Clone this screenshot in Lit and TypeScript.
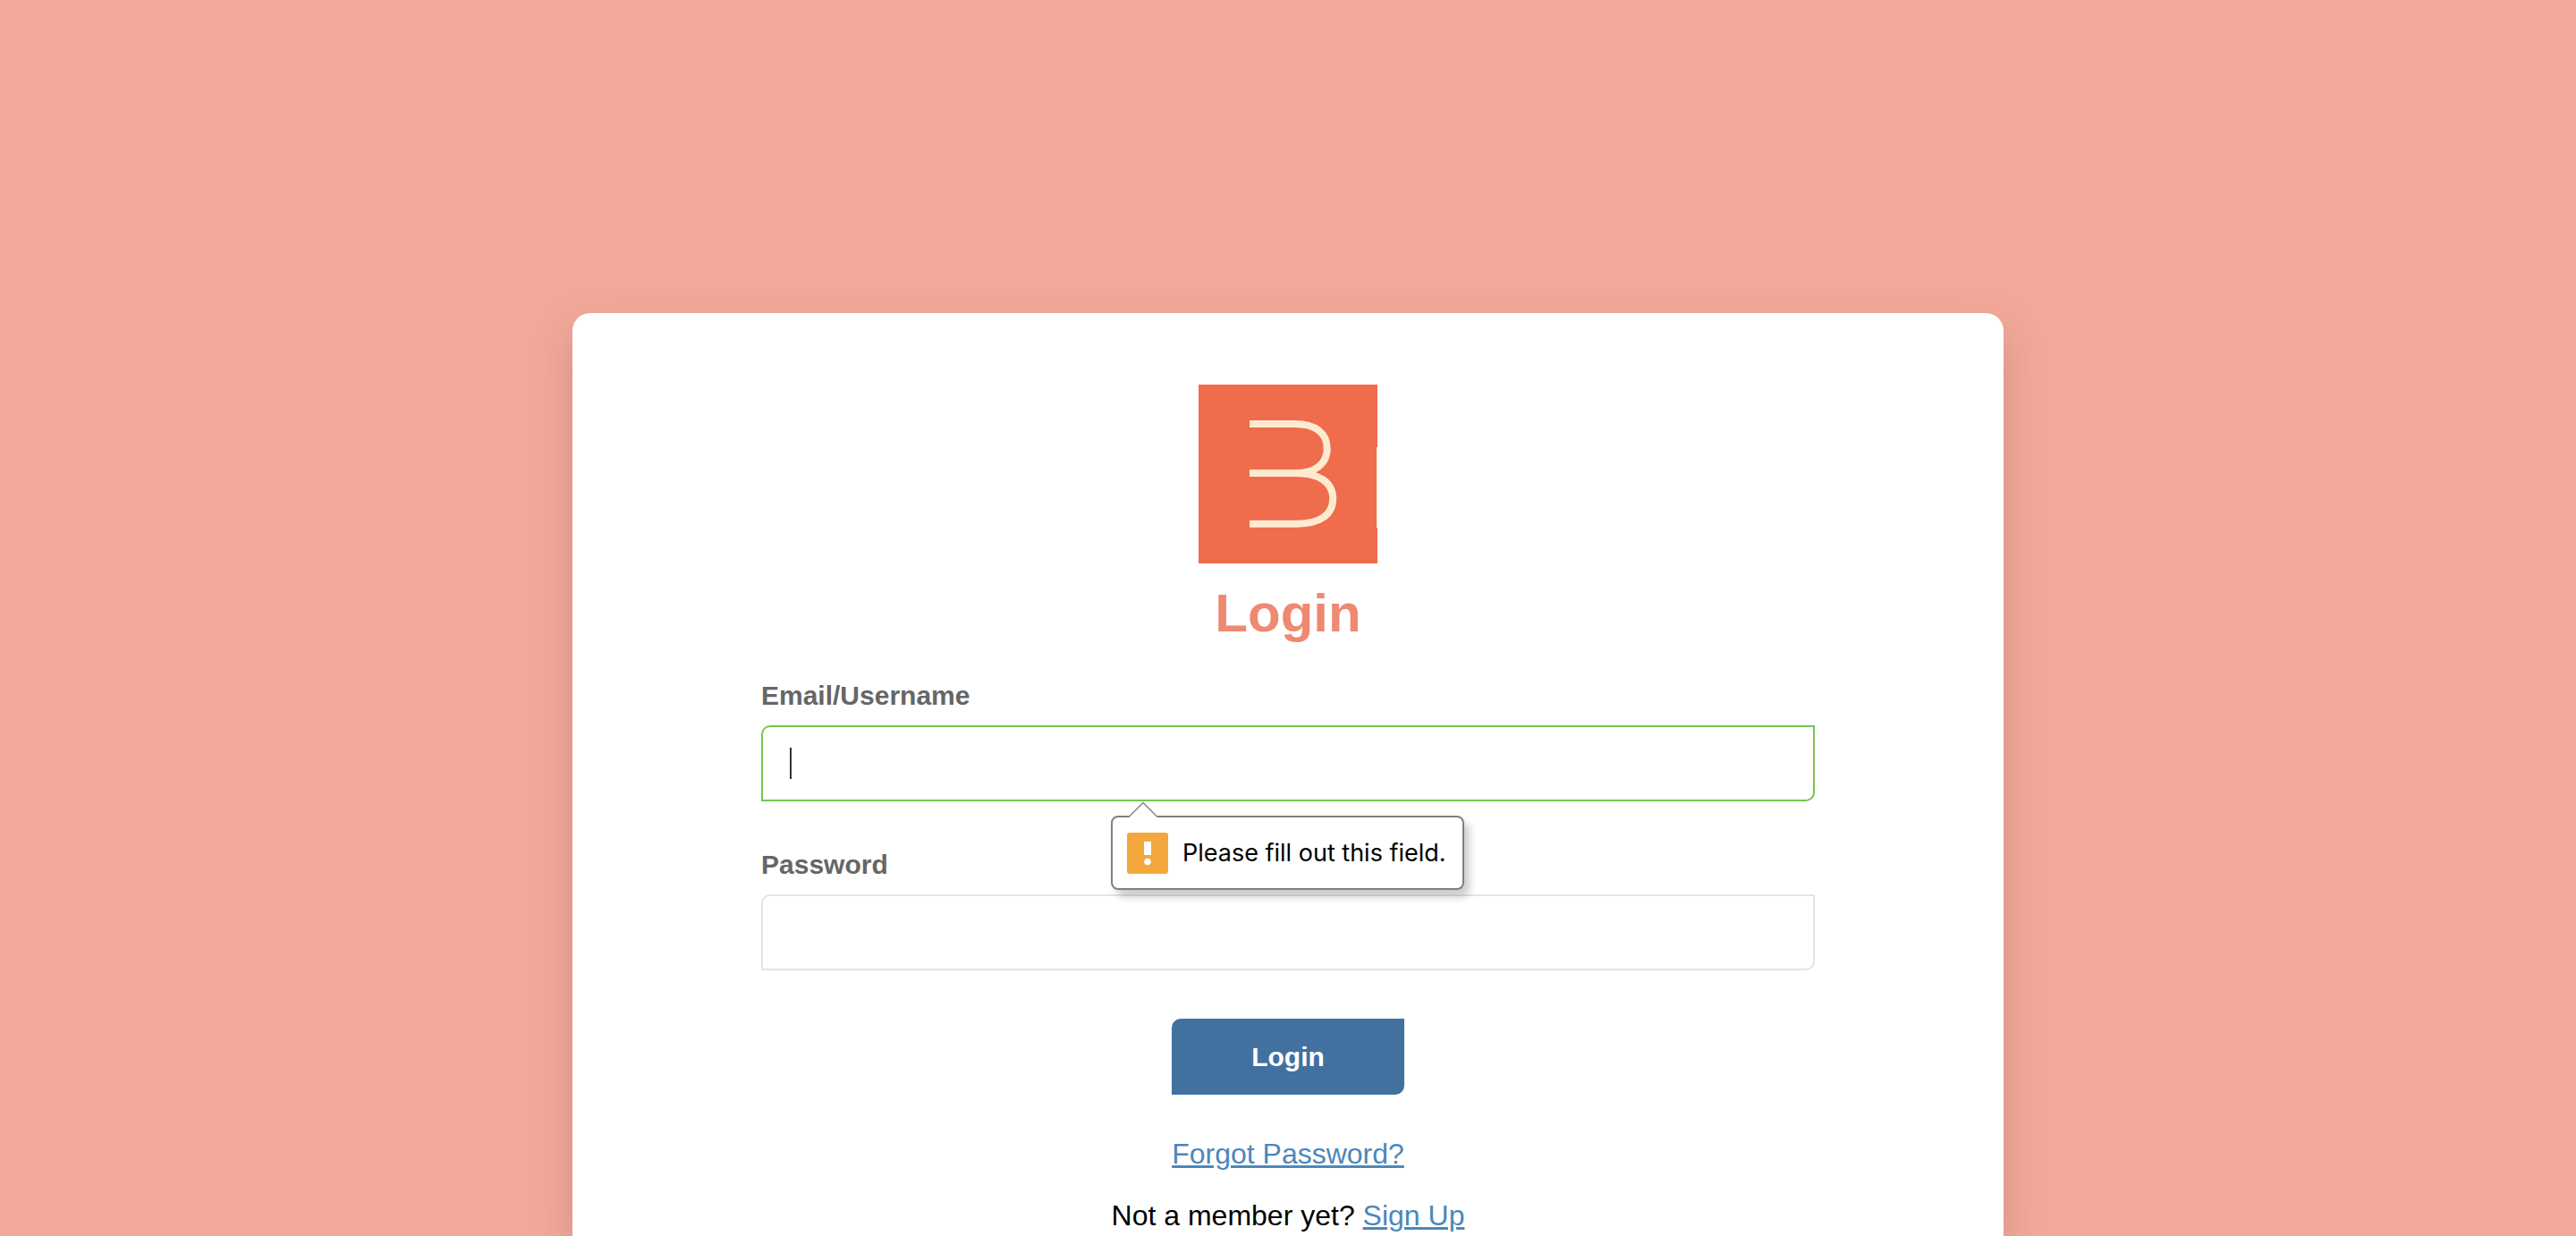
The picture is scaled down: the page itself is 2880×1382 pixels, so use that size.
import { LitElement, html, css } from "lit";
import { customElement } from "lit/decorators.js";

@customElement("brand-logo")
export class BrandLogo extends LitElement {
  static styles = css`
    :host {
      display: block;
      width: 200px;
      height: 200px;
    }
    .mark {
      display: block;
      width: 100%;
      height: 100%;
    }
  `;

  render() {
    return html`
      <svg class="mark" viewBox="0 0 200 200" aria-hidden="true">
        <rect width="200" height="200" fill="#ef6c4d" />
        <g fill="none" stroke="#feebcf" stroke-width="8">
          <path d="M57 44H108C130 44 143.7 54 143.7 71.5C143.7 89 130 99 108 99H57" />
          <path d="M108 99C134 99 150.2 108.5 150.2 127.5C150.2 146 135 155.7 110 155.7H57" />
        </g>
        <rect x="199" y="70" width="1" height="90" fill="#feebcf" />
      </svg>
    `;
  }
}

@customElement("field-hint")
export class FieldHint extends LitElement {
  static styles = css`
    :host {
      display: block;
    }
    .bubble {
      position: relative;
      display: flex;
      align-items: center;
      gap: 16px;
      box-sizing: border-box;
      height: 83px;
      padding: 0 18px 0 16px;
      border: 2px solid #808080;
      border-radius: 8px;
      background: #fff;
      box-shadow: 6px 8px 8px rgba(0, 0, 0, 0.2);
      color: #000;
      font: 27px/36px Inter, "Liberation Sans", sans-serif;
      white-space: nowrap;
    }
    .pointer {
      position: absolute;
      left: 17px;
      top: -18px;
      width: 34px;
      height: 19px;
    }
    .icon {
      flex: none;
      width: 46px;
      height: 46px;
    }
  `;

  render() {
    return html`
      <div class="bubble" role="alert">
        <svg class="pointer" viewBox="0 0 34 19" aria-hidden="true">
          <path d="M1 17.5L17 1.5L33 17.5V19H1Z" fill="#fff" />
          <path d="M1 17.5L17 1.5L33 17.5" fill="none" stroke="#808080" stroke-width="1.3" />
        </svg>
        <svg class="icon" viewBox="0 0 46 46" aria-hidden="true">
          <rect width="46" height="46" rx="3" fill="#f3a73c" />
          <rect x="19" y="10" width="8" height="15" fill="#fff" />
          <circle cx="23" cy="32.5" r="3.8" fill="#fff" />
        </svg>
        <span><slot></slot></span>
      </div>
    `;
  }
}

@customElement("app-root")
export class AppRoot extends LitElement {
  static styles = css`
    :host {
      display: block;
      font-family: "Liberation Sans", Arial, sans-serif;
    }
    .page {
      display: flex;
      flex-direction: column;
      align-items: center;
      box-sizing: border-box;
      min-height: 100vh;
      padding-top: 350px;
      overflow: hidden;
      background: #f3a99a;
    }
    .card {
      flex: 1;
      display: flex;
      flex-direction: column;
      align-items: center;
      box-sizing: border-box;
      width: 100%;
      max-width: 1600px;
      padding: 80px 211px 0;
      border-radius: 20px 20px 0 0;
      background: #fff;
      box-shadow: 0 20px 50px rgba(0, 0, 0, 0.15);
    }
    .title {
      margin: 20px 0 39px;
      color: #ee8972;
      font-size: 60px;
      line-height: 72px;
      font-weight: 700;
    }
    .form {
      display: flex;
      flex-direction: column;
      align-items: center;
      gap: 54px;
      width: 100%;
    }
    .field {
      display: flex;
      flex-direction: column;
      gap: 16px;
      width: 100%;
    }
    .label {
      align-self: flex-start;
      color: #666;
      font-size: 30px;
      line-height: 34px;
      font-weight: 700;
    }
    .control {
      position: relative;
      display: flex;
    }
    .input {
      flex: 1;
      min-width: 0;
      box-sizing: border-box;
      height: 85px;
      padding: 0 30px;
      border: 2px solid #e4e4e4;
      border-radius: 10px 0;
      outline: none;
      background: #fff;
      color: #333;
      font: 30px/36px "Liberation Sans", Arial, sans-serif;
    }
    .input.active {
      border-color: #76c450;
      caret-color: transparent;
    }
    .caret {
      position: absolute;
      left: 32px;
      top: 25px;
      width: 2px;
      height: 35px;
      background: #333;
    }
    .hint {
      position: absolute;
      z-index: 1;
      left: calc(50% - 198px);
      top: 101px;
    }
    .submit {
      width: 260px;
      height: 85px;
      padding: 0;
      border: 0;
      border-radius: 10px 0;
      background: #4271a0;
      color: #fff;
      font: 700 30px/36px "Liberation Sans", Arial, sans-serif;
      cursor: pointer;
    }
    .links {
      display: flex;
      flex-direction: column;
      align-items: center;
      gap: 33px;
      margin-top: 48px;
      color: #000;
      font-size: 32px;
      line-height: 36px;
    }
    .text {
      margin: 0;
    }
    .link {
      color: #4c87bb;
      text-decoration: underline;
      text-decoration-thickness: 3px;
    }
  `;

  render() {
    return html`
      <div class="page">
        <main class="card">
          <brand-logo></brand-logo>
          <h1 class="title">Login</h1>
          <form class="form" novalidate @submit=${(e: Event) => e.preventDefault()}>
            <div class="field">
              <label class="label" for="username">Email/Username</label>
              <div class="control">
                <input class="input active" id="username" type="text" autocomplete="off" required />
                <span class="caret"></span>
                <field-hint class="hint">Please fill out this field.</field-hint>
              </div>
            </div>
            <div class="field">
              <label class="label" for="password">Password</label>
              <div class="control">
                <input class="input" id="password" type="password" autocomplete="off" required />
              </div>
            </div>
            <button class="submit" type="submit">Login</button>
          </form>
          <div class="links">
            <a class="link" href="#forgot">Forgot Password?</a>
            <p class="text">Not a member yet? <a class="link" href="#signup">Sign Up</a></p>
          </div>
        </main>
      </div>
    `;
  }
}
